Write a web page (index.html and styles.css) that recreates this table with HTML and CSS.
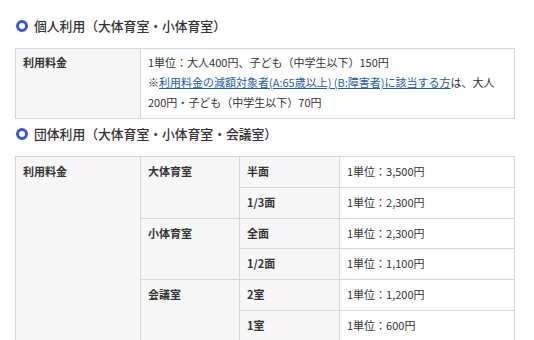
FILE: index.html
```html
<!DOCTYPE html>
<html lang="ja">
<head>
<meta charset="utf-8">
<link rel="stylesheet" href="styles.css">
</head>
<body>
<div class="page">
  <h2 class="section-title"><span class="ring"></span>個人利用（大体育室・小体育室）</h2>
  <table class="fee fee-single">
    <colgroup><col class="c-head"><col></colgroup>
    <tr>
      <th>利用料金</th>
      <td>1単位：大人400円、子ども（中学生以下）150円<br>※<a href="#">利用料金の減額対象者(A:65歳以上) (B:障害者)に該当する方</a>は、大人200円・子ども（中学生以下）70円</td>
    </tr>
  </table>
  <h2 class="section-title second"><span class="ring"></span>団体利用（大体育室・小体育室・会議室）</h2>
  <table class="fee fee-group">
    <colgroup><col class="c-head"><col class="c-room"><col class="c-size"><col></colgroup>
    <tr>
      <th rowspan="6">利用料金</th>
      <th rowspan="2">大体育室</th>
      <th>半面</th>
      <td>1単位：3,500円</td>
    </tr>
    <tr><th>1/3面</th><td>1単位：2,300円</td></tr>
    <tr>
      <th rowspan="2">小体育室</th>
      <th>全面</th>
      <td>1単位：2,300円</td>
    </tr>
    <tr><th>1/2面</th><td>1単位：1,100円</td></tr>
    <tr>
      <th rowspan="2">会議室</th>
      <th>2室</th>
      <td>1単位：1,200円</td>
    </tr>
    <tr><th>1室</th><td>1単位：600円</td></tr>
  </table>
</div>
</body>
</html>
```

FILE: styles.css
```css
html, body {
  margin: 0;
  padding: 0;
  background: #ffffff;
}
body {
  font-family: "Noto Sans CJK JP", "Noto Sans", sans-serif;
  color: #333333;
}
.page {
  padding: 16px 0 0 15px;
  width: 500px;
}
.section-title {
  display: flex;
  align-items: center;
  gap: 6px;
  margin: 0 0 12px 1px;
  height: 20px;
  font-size: 12.8px;
  font-weight: 500;
  line-height: 20px;
  color: #333333;
}
.section-title.second {
  margin-top: 5px;
}
.ring {
  display: block;
  width: 6px;
  height: 6px;
  border: 3px solid #3b55d6;
  border-radius: 50%;
  flex: none;
}
.fee {
  width: 500px;
  border-collapse: collapse;
  table-layout: fixed;
  font-size: 11px;
  margin: 0;
}
.fee th, .fee td {
  border: 1px solid #d3d7de;
  text-align: left;
  vertical-align: top;
  padding: 5px 7px;
  line-height: 19.8px;
}
.fee th {
  background: #f7f7f7;
  font-weight: bold;
}
.fee td {
  background: #ffffff;
}
.fee-single th, .fee-single td {
  padding: 3px 7px 6px;
  line-height: 20px;
}
.c-head { width: 125px; }
.c-room { width: 99px; }
.c-size { width: 100px; }
.fee a {
  color: #1f5bb0;
  text-decoration: underline;
}
```
